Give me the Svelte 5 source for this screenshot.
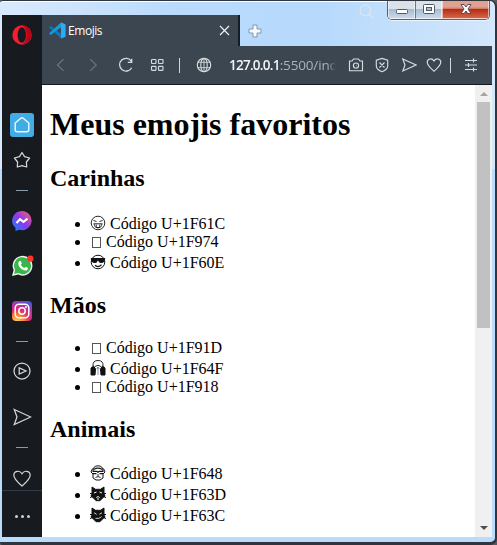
<script>
  const sections = [
    { title: 'Carinhas', items: [['tongue', '1F61C'], ['missing', '1F974'], ['cool', '1F60E']] },
    { title: 'Mãos', items: [['missing', '1F91D'], ['pray', '1F64F'], ['missing', '1F918']] },
    { title: 'Animais', items: [['monkey', '1F648'], ['cat', '1F63D'], ['slycat', '1F63C']] }
  ];
</script>

{#snippet heart()}
  <path d="M8 14.2C5.5 12 1.2 8.6 1.2 5.3C1.2 1.5 6 .6 8 4C10 .6 14.8 1.5 14.8 5.3C14.8 8.6 10.5 12 8 14.2Z" />
{/snippet}

{#snippet plane()}
  <path d="M1.8 2L15 8L1.8 14L4 8Z" />
{/snippet}

{#snippet glyph(kind)}
  <svg class="emoji" viewBox="0 0 16 16" fill="none" stroke="#111">
    {#if kind === 'tongue'}
      <circle cx="8" cy="8" r="6.8" stroke-width=".9" />
      <path d="M3.4 5.5L6.5 6.5M9.5 6.5L12.6 5.5M3.5 8.8H12.5" stroke-width=".9" />
      <path d="M4 9Q4.5 13 8 13Q11.5 13 12 9M6.3 9.5V12.5H9.7V9.5" stroke-width=".8" />
    {:else if kind === 'cool'}
      <circle cx="8" cy="8" r="6.8" />
      <path d="M1.2 4.5H14.8L14 7.5Q12.5 9.2 9.5 8.2L8.5 6H7.5L6.5 8.2Q3.5 9.2 2 7.5Z" fill="#111" />
      <path d="M5 11.2Q8 14 11.5 10.8" stroke-width="1.2" />
    {:else if kind === 'pray'}
      <path d="M3 6Q2.5 .5 8 .5Q13.5 .5 13 6M5 6.5Q8 4 11 6.5" stroke-width=".9" />
      <path d="M1 15V8L3.5 6L5.5 9L5 15ZM15 15V8L12.5 6L10.5 9L11 15Z" fill="#111" />
      <path d="M8 7V15M6.8 9L8 7L9.2 9" stroke="#678" stroke-width=".8" />
    {:else if kind === 'monkey'}
      <path d="M3 6Q3 .8 8 .8Q13 .8 13 6M2.5 3.5L1 7L3 9V13L6 15H10L13 13V9L15 7L13.5 3.5" />
      <path d="M3.7 4.5Q8 1.8 12.3 4.5M2.5 6.4H7L8 7.4L9 6.4H13.5M3 8.6H6.5M9.5 8.6H13" stroke-width="1.1" />
      <path d="M5.5 12.5Q8 10.5 10.5 12.5M7 10H9" stroke-width=".9" />
    {:else}
      <path d="M2 1L5.5 3.3H10.5L14 1V8L15 10L12.5 12L10 14.7H6L3.5 12L1 10L2 8Z" fill="#111" />
      <path d="M0 7.5H3M0 11.5L4 10M13 7.5H16M12 10L16 11.5" />
      {#if kind === 'cat'}
        <path d="M4 7L6.5 6M9.5 6L12 7M6.3 11.6L8 10.5L9.7 11.6M7 13H9" stroke="#fff" />
      {:else}
        <path d="M4 5.8L6.7 7.3M12 5.8L9.3 7.3M5.5 11.3Q9 12.3 11.5 9.7" stroke="#fff" stroke-width=".8" />
      {/if}
    {/if}
  </svg>
{/snippet}

<div class="window">
  <div class="caption">
    <svg class="search" viewBox="0 0 16 16" fill="none" stroke="#dce5ef" stroke-width="1.2"><circle cx="6.5" cy="6.5" r="5.3" /><path d="M10.3 10.3L15 15" /></svg>
    <div class="controls">
      <span class="min"><svg width="14" height="14"><rect x="1.5" y="6.5" width="11" height="4" rx="1" fill="#fff" stroke="#51586a" /></svg></span>
      <span class="max"><svg width="14" height="14"><rect x="1.5" y="1.5" width="11" height="9" rx="1" fill="#fff" stroke="#51586a" /><rect x="4.5" y="4.5" width="5" height="3" fill="#aebed2" stroke="#51586a" /></svg></span>
      <span class="exit"><svg width="14" height="14" viewBox="0 0 14 14"><path d="M2 1.5H5.2L7 4L8.8 1.5H12L9 6L12 10.5H8.8L7 8L5.2 10.5H2L5 6Z" fill="#fff" stroke="#594c5c" /></svg></span>
    </div>
  </div>

  <div class="body">
    <aside>
      <svg class="opera" width="20" height="20" viewBox="0 0 20 20"><ellipse cx="10" cy="10" rx="9.7" ry="9.7" fill="#f71d30" /><path d="M10 .3A9.7 9.7 0 0 1 10 19.7Q14.5 17 14.5 10T10 .3Z" fill="#b90517" /><ellipse cx="9.8" cy="10" rx="4.2" ry="7.7" fill="#171b1f" /></svg>
      <div class="home"><svg width="18" height="18" viewBox="0 0 18 18" fill="none" stroke="#effaff" stroke-width="1.4"><path d="M2.2 7L7.8 2.2Q9 1.3 10.2 2.2L15.8 7V13.8Q15.8 15.7 13.8 15.7H4.2Q2.2 15.7 2.2 13.8Z" /></svg></div>
      <svg class="star line" width="18" height="18" viewBox="0 0 18 18"><path d="M9 1.5L11.5 5.6L16.6 7L13.4 11L13.7 16L9 14.6L4.3 16L4.6 11L1.4 7L6.5 5.6Z" stroke-linejoin="round" /></svg>
      <i class="d1"></i>
      <svg class="messenger" width="20" height="20" viewBox="0 0 20 20">
        <defs><linearGradient id="msg" x1="0" y1="1" x2="1" y2="0"><stop offset="0" stop-color="#078cff" /><stop offset=".5" stop-color="#8b38ed" /><stop offset="1" stop-color="#ff6460" /></linearGradient></defs>
        <path d="M10 0A9.8 9.6 0 1 1 7 18.8L3.5 20V16.8A9.8 9.6 0 0 1 10 0Z" fill="url(#msg)" /><path d="M4.5 12L8 8.2L11.5 10.8L15.5 7.6" fill="none" stroke="#fff" stroke-width="2.1" />
      </svg>
      <svg class="whatsapp" width="22" height="22" viewBox="0 0 22 22">
        <path d="M1 20L2.4 15A9.2 9.2 0 1 1 6 18.7Z" fill="#39b54a" stroke="#ecf3ed" stroke-width="1.4" /><path d="M7 6.2L8.8 6L9.8 8.5L8.8 9.8Q10 12 12.4 13.1L13.7 11.7L16 12.9Q15.9 15.5 13.3 15.6Q9 15 6.6 10.6Q5.5 8 7 6.2Z" fill="#fff" /><circle cx="18.3" cy="3.6" r="3.2" fill="#ff3327" />
      </svg>
      <svg class="insta" width="20" height="20" viewBox="0 0 20 20">
        <defs><radialGradient id="ig" cx=".25" cy="1.05" r="1.1"><stop offset="0" stop-color="#ffd760" /><stop offset=".3" stop-color="#fb8b31" /><stop offset=".55" stop-color="#e32f69" /><stop offset=".78" stop-color="#b930a4" /><stop offset="1" stop-color="#5753cf" /></radialGradient></defs>
        <rect width="20" height="20" rx="4" fill="url(#ig)" /><rect x="3.2" y="3.2" width="13.6" height="13.6" rx="3.7" fill="none" stroke="#fff" stroke-width="1.5" /><circle cx="10" cy="10" r="3.2" fill="none" stroke="#fff" stroke-width="1.5" /><circle cx="14" cy="6" r="1" fill="#fff" />
      </svg>
      <i class="d2"></i>
      <svg class="play line" width="18" height="18" viewBox="0 0 18 18"><circle cx="9" cy="9" r="8" /><path d="M6.2 5.9L13 9L6.2 12.1Z" /></svg>
      <svg class="plane line" width="20" height="20" viewBox="0 0 16 16">{@render plane()}</svg>
      <i class="d3"></i>
      <svg class="love line" width="20" height="18" viewBox="0 0 16 15">{@render heart()}</svg>
      <div class="more"><b></b><b></b><b></b></div>
    </aside>

    <section class="browser">
      <div class="tabs">
        <div class="tab">
          <svg width="17" height="17" viewBox="0 0 17 17"><path d="M12 .5L16.5 2.3V14.7L12 16.5L0 5.4L1.8 4L12 11.8Z" fill="#0879bd" /><path d="M12 .5L0 11.6L1.8 13L12 5.2Z" fill="#159cdf" /><path d="M12 .5L16.5 2.3V14.7L12 16.5Z" fill="#2cabf2" /></svg>
          <span>Emojis</span>
          <svg class="close" width="11" height="11"><path d="M1 1L10 10M10 1L1 10" stroke="#edf0f2" stroke-width="1.2" /></svg>
        </div>
        <svg class="plus" width="14" height="14"><path d="M5 1H9V5H13V9H9V13H5V9H1V5H5Z" fill="#f5faff" stroke="#8398b1" /></svg>
      </div>
      <div class="toolbar">
        <svg class="dim" viewBox="0 0 16 16"><path d="M11.5 2.2L5.5 8L11.5 13.8" /></svg>
        <svg class="dim" style:margin-left="18px" viewBox="0 0 16 16"><path d="M4.2 2.2L10.2 8L4.2 13.8" /></svg>
        <svg style:margin-left="16px" viewBox="0 0 16 16"><path d="M13.4 4.3A6.4 6.4 0 1 0 13.7 10.7M13.7 1.8V5.4H9.8" stroke-width="1.3" /></svg>
        <svg style:margin-left="15px" viewBox="0 0 16 16"><rect x="2.5" y="2.5" width="4.5" height="4" rx=".7" /><rect x="9.5" y="2.5" width="4.5" height="4" rx=".7" /><rect x="2.5" y="9.3" width="4.5" height="4" rx=".7" /><rect x="9.5" y="9.3" width="4.5" height="4" rx=".7" /></svg>
        <em style:margin-left="14px"></em>
        <svg style:margin-left="16px" viewBox="0 0 16 16"><circle cx="8" cy="8" r="6.7" /><ellipse cx="8" cy="8" rx="3.2" ry="6.7" /><path d="M2 5.3H14M2 10.7H14M8 1.3V14.7" stroke-width=".9" /></svg>
        <div class="url"><strong>127.0.0.1</strong><span>:5500/ind</span></div>
        <svg style:margin-left="12px" viewBox="0 0 16 16"><path d="M1.5 4H4L5.5 2H10.5L12 4H14.5V13.7H1.5Z" /><circle cx="8" cy="8.6" r="2.6" /><path d="M8 8.6H8.5" /></svg>
        <svg style:margin-left="10px" viewBox="0 0 16 16"><path d="M8 1.4L13.7 3.1V9Q13.7 12.3 8 14.7Q2.3 12.3 2.3 9V3.1ZM5.5 5.5L10.5 10.5M10.5 5.5L5.5 10.5" /></svg>
        <svg style:margin-left="11px" viewBox="0 0 16 16">{@render plane()}</svg>
        <svg style:margin-left="9px" viewBox="0 0 16 16">{@render heart()}</svg>
        <em style:margin-left="8px"></em>
        <svg style:margin-left="12px" viewBox="0 0 16 16"><path d="M2 3.5H14M2 8H14M2 12.5H14M10.5 1.5V5.5M5.5 6V10M10.5 10.5V14.5" /></svg>
      </div>
      <div class="viewport">
        <main>
          <h1>Meus emojis favoritos</h1>
          {#each sections as section}
            <h2>{section.title}</h2>
            <ul>
              {#each section.items as [kind, code]}
                <li class:plain={kind === 'missing'}>
                  {#if kind === 'missing'}<span class="tofu"></span>{:else}{@render glyph(kind)}{/if}
                  <span>Código U+{code}</span>
                </li>
              {/each}
            </ul>
          {/each}
        </main>
        <div class="scroll"><span class="up"></span><span class="thumb"></span><span class="down"></span></div>
      </div>
    </section>
  </div>
</div>

<style>
  :global(body) { background: #555b61; overflow: hidden; }
  .window { box-sizing: border-box; width: 497px; height: 545px; display: flex; flex-direction: column; border: solid #30343d; border-width: 1px 2px 3px 0; border-radius: 3px 7px 7px 3px; overflow: hidden; background: linear-gradient(90deg, #d9eafd 0, #badbfc 35%, #b6d9fc 65%, #d4e7fb 100%) top / 100% 168px no-repeat, #b9dbfc; box-shadow: inset 0 1px #fff; }
  .caption { height: 14px; flex: none; display: flex; justify-content: flex-end; align-items: flex-start; position: relative; z-index: 1; }
  .search { width: 16px; height: 16px; margin: 3px 12px 0 0; }
  .controls { box-sizing: border-box; display: flex; width: 103px; height: 19px; margin-right: 5px; border: 1px solid #596171; border-top: 0; border-radius: 0 0 5px 5px; overflow: hidden; box-shadow: 0 1px #e7f3ff; }
  .controls span { box-sizing: border-box; display: flex; align-items: center; justify-content: center; border: 1px solid #ffffff90; border-top: 0; }
  .min, .max { width: 27px; background: linear-gradient(#d9e2eb 0 48%, #a9bbcf 50%, #c7d9ec); }
  .max { border-left-color: #69768b !important; }
  .exit { width: 47px; background: linear-gradient(#e0a28f 0 35%, #cc6958 48%, #b62d18 50%, #d86542); }
  .body { display: flex; height: 522px; margin-left: 2px; width: 490px; }
  aside { width: 40px; flex: none; background: #171b1f; display: flex; flex-direction: column; align-items: center; }
  aside > * { flex: none; display: block; }
  .line { fill: none; stroke: #d2d7da; stroke-width: 1.25; }
  .opera { margin-top: 10px; }
  .home { width: 24px; height: 24px; border-radius: 3px; background: #42ade5; margin-top: 68px; display: flex; align-items: center; justify-content: center; }
  .star { margin-top: 24px; }
  aside .star { margin-top: 14px; }
  .star { margin-top: 14px; }
  aside i { width: 12px; height: 1px; background: #899ba7; }
  .star + .d1 { margin-top: 21px; }
  .messenger { margin-top: 20px; }
  .whatsapp { margin-top: 24px; margin-left: 1px; }
  .insta { margin-top: 24px; }
  .d2 { margin-top: 20px; }
  .play { margin-top: 20px; }
  .plane { margin-top: 27px; stroke-width: 1; }
  .d3 { margin-top: 20px; }
  .love { margin-top: 21px; stroke-width: 1; }
  .more { display: flex; width: 100%; height: 47px; margin-top: 3px; border-top: 1px solid #303c48; padding-top: 5px; box-sizing: border-box; align-items: center; justify-content: center; gap: 3px; }
  .more b { width: 3px; height: 3px; background: #cdd3d6; border-radius: 50%; }
  .browser { width: 450px; display: flex; flex-direction: column; }
  .tabs { height: 31px; display: flex; }
  .tab { box-sizing: border-box; width: 198px; height: 31px; display: flex; align-items: center; background: #3b4650; border-right: 2px solid #171c22; padding-left: 7px; color: #fff; font: 12px "Open Sans", "Noto Sans", sans-serif; letter-spacing: -.45px; }
  .tab span { margin-left: 2px; }
  .close { margin-left: auto; margin-right: 8px; }
  .plus { margin: 9px 0 0 8px; }
  .toolbar { height: 38px; display: flex; align-items: center; background: #3b4650; border-bottom: 1px solid #15191d; padding-left: 10px; }
  .toolbar > svg { width: 16px; height: 16px; flex: none; fill: none; stroke: #d6dbdf; stroke-width: 1.15; }
  .toolbar > .dim { stroke: #6b7680; }
  .toolbar em { width: 1px; height: 15px; background: #d1d7db; flex: none; }
  .url { width: 107px; margin-left: 17px; flex: none; white-space: nowrap; overflow: hidden; font: 13.5px/20px "Open Sans", "Noto Sans", sans-serif; color: #aab2b9; letter-spacing: -.15px; mask-image: linear-gradient(90deg, #000 92%, transparent); }
  .url strong { color: #f3f5f6; font-weight: 600; letter-spacing: -.75px; }
  .viewport { height: 452px; display: flex; background: #fff; }
  main { width: 433px; box-sizing: border-box; padding: 21px 8px 0; color: #000; font: 16px/18px "Liberation Serif", serif; overflow: hidden; }
  h1 { margin: 0 0 22px; font-size: 32px; line-height: 37px; }
  h2 { margin: 0 0 20px; font-size: 24px; line-height: 27px; height: 27px; }
  h2:last-of-type { margin-bottom: 19px; }
  ul { margin: 0 0 20px; padding: 0; list-style: none; }
  li { height: 21px; display: flex; align-items: flex-end; padding-left: 25px; white-space: nowrap; }
  li::before { content: ""; width: 5px; height: 5px; background: #000; border-radius: 50%; margin: 0 10px 6px 0; }
  li.plain { height: 18px; }
  .emoji { width: 16px; height: 16px; margin: 0 4px 2px 0; }
  .tofu { box-sizing: border-box; width: 9px; height: 11px; border: 1px solid #555; margin: 0 5px 3px 2px; }
  .scroll { width: 17px; background: #f0f0f0; display: flex; flex-direction: column; align-items: center; }
  .up, .down { width: 0; height: 0; border: solid transparent; border-width: 0 4px; }
  .up { border-bottom: 4px solid #a3a3a3; margin-top: 7px; }
  .thumb { width: 13px; height: 226px; background: #c1c1c1; margin-top: 6px; }
  .down { border-top: 4px solid #4f4f4f; margin-top: auto; margin-bottom: 7px; }
</style>
